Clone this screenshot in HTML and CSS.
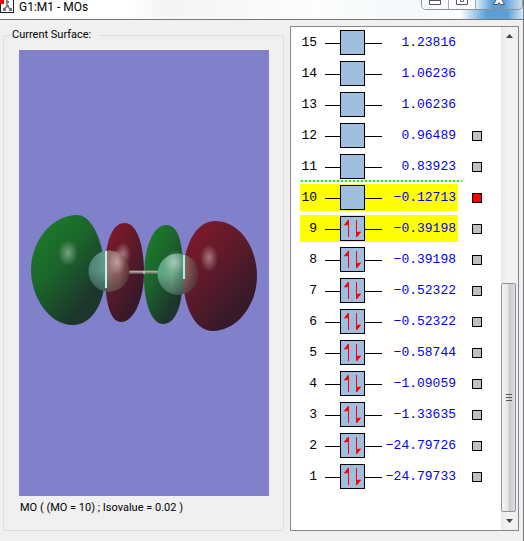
FILE: index.html
```html
<!DOCTYPE html>
<html lang="en">
<head>
  <meta charset="UTF-8" />
  <meta name="viewport" content="width=device-width, initial-scale=1.0"/>
  <title>G1:M1 - MOs</title>
  <link rel="stylesheet" href="styles.css">
</head>
<body>
  <header class="titlebar">
    <svg class="app-icon" width="14" height="13" viewBox="0 0 14 13">
      <path d="M0 0h14v13H0z" fill="#222"/>
      <path d="M1 0h12v12H1z" fill="#fff"/>
      <path d="M7 0v6M7 6L4 9M7 6l3 3" stroke="#777" stroke-width="1.5" fill="none"/>
      <path d="M6 1h3v2H6zM6 5h3v2H6zM3 8h3v3H3zM9 8h3v3H9z" fill="#777"/>
      <path d="M0 0h4v4H0z" fill="#f00"/>
    </svg>
    <h1>G1:M1 - MOs</h1>
    <div class="window-buttons">
      <button aria-label="Minimize"><svg width="12" height="5" viewBox="0 0 12 5"><path d="M.5 0v4.500h11V0M1 .5h10" fill="#fff" stroke="#535666"/></svg></button>
      <button aria-label="Maximize"><svg width="12" height="5" viewBox="0 0 12 5"><path d="M.5 0v4.500h11V0M4.500 0v1.500h3V0" fill="#fff" stroke="#535666"/></svg></button>
      <button class="close" aria-label="Close"><svg width="12" height="5" viewBox="0 0 12 5"><path d="M3 0L.5 4.500h4L6 2.500l1.500 2h4L9 0" fill="#fff" stroke="#535666"/></svg></button>
    </div>
  </header>

  <main class="content">
    <fieldset class="surface">
      <legend>Current Surface:</legend>
      <div class="view">
        <svg viewBox="0 0 250 446" role="img" aria-label="Molecular orbital surface">
          <defs>
            <linearGradient id="green" x1="0.25" y1="0.05" x2="0.8" y2="0.75">
              <stop offset="0" stop-color="#1c7a2a"/>
              <stop offset="0.45" stop-color="#1b632b"/>
              <stop offset="1" stop-color="#1c362b"/>
            </linearGradient>
            <linearGradient id="red" x1="0.2" y1="0.05" x2="0.75" y2="0.8">
              <stop offset="0" stop-color="#7c1a2a"/>
              <stop offset="0.45" stop-color="#5f1a2a"/>
              <stop offset="1" stop-color="#371929"/>
            </linearGradient>
            <linearGradient id="atom-left" x1="0" y1="0" x2="1" y2="0">
              <stop offset="0" stop-color="#4a7f70"/>
              <stop offset="0.42" stop-color="#659b8a"/>
              <stop offset="0.43" stop-color="#9c7673"/>
              <stop offset="0.75" stop-color="#8c5c5a"/>
              <stop offset="1" stop-color="#5b3035"/>
            </linearGradient>
            <linearGradient id="atom-right" x1="0" y1="0" x2="1" y2="0">
              <stop offset="0" stop-color="#57a57b"/>
              <stop offset="0.35" stop-color="#70ae8c"/>
              <stop offset="0.62" stop-color="#4f856c"/>
              <stop offset="0.63" stop-color="#906864"/>
              <stop offset="1" stop-color="#5c2a31"/>
            </linearGradient>
            <linearGradient id="shade" x1="0" y1="0" x2="0" y2="1">
              <stop offset="0.5" stop-color="#24272b" stop-opacity="0"/>
              <stop offset="1" stop-color="#24272b" stop-opacity="0.5"/>
            </linearGradient>
            <radialGradient id="shine">
              <stop offset="0" stop-color="#fff" stop-opacity="0.4"/>
              <stop offset="1" stop-color="#fff" stop-opacity="0"/>
            </radialGradient>
          </defs>
          <!-- lobes -->
          <path d="M58 165C75 165 86 198 86 226C86 254 72 275 54 275C30 275 12 247 12 220C12 190 34 165 58 165Z" fill="url(#green)"/>
          <path d="M106 173C118 173 125 196 125 222C125 249 115 272 102 272C91 272 86 252 86 222C86 194 92 173 106 173Z" fill="url(#red)"/>
          <path d="M147 175C160 175 164 193 164 225C164 252 158 274 144 274C132 274 125 251 125 228C125 197 134 175 147 175Z" fill="url(#green)"/>
          <path d="M196 171C221 171 238 198 238 226C238 256 217 281 194 281C174 281 164 253 164 226C164 196 177 171 196 171Z" fill="url(#red)"/>
          <ellipse cx="49" cy="203" rx="10" ry="13" fill="url(#shine)"/>
          <ellipse cx="104" cy="204" rx="8" ry="12" fill="url(#shine)"/>
          <ellipse cx="190" cy="208" rx="9" ry="14" fill="url(#shine)"/>
          <!-- bond -->
          <path d="M110 222H141" stroke="#8f8a7c" stroke-width="3"/>
          <path d="M110 221.500H141" stroke="#b3a79c"/>
          <path d="M125 221v3" stroke="#d8f5ef"/>
          <!-- atoms -->
          <circle cx="90" cy="221" r="20.500" fill="url(#atom-left)"/>
          <circle cx="90" cy="221" r="20.500" fill="url(#shade)"/>
          <ellipse cx="98" cy="212" rx="9" ry="13" fill="url(#shine)"/>
          <path d="M87 201v37" stroke="#b6f5ee" stroke-width="2"/>
          <circle cx="159" cy="224" r="20.500" fill="url(#atom-right)"/>
          <circle cx="159" cy="224" r="20.500" fill="url(#shade)"/>
          <ellipse cx="156" cy="212" rx="11" ry="12" fill="url(#shine)"/>
          <path d="M165 205v24" stroke="#a9f5ec" stroke-width="2"/>
        </svg>
      </div>
      <p class="caption">MO ( (MO = 10) ; Isovalue = 0.02 )</p>
    </fieldset>

    <section class="orbitals">
      <table>
        <tbody id="orbital-rows"></tbody>
      </table>
      <div class="scrollbar">
        <button aria-label="Scroll up"><svg width="7" height="4" viewBox="0 0 7 4"><path d="M0 4L3.500 0L7 4z" fill="#444"/></svg></button>
        <div class="track"><div class="thumb"><i></i><i></i><i></i></div></div>
        <button aria-label="Scroll down"><svg width="7" height="4" viewBox="0 0 7 4"><path d="M0 0h7L3.500 4z" fill="#444"/></svg></button>
      </div>
    </section>
  </main>

  <script>
    const energies = [
      "-24.79733", "-24.79726", "-1.33635", "-1.09059", "-0.58744",
      "-0.52322", "-0.52322", "-0.39198", "-0.39198", "-0.12713",
      "0.83923", "0.96489", "1.06236", "1.06236", "1.23816"
    ];
    const occupied = 9;
    const electrons = `
      <path d="M8.500 21V4M8 4.500v4L4.500 9z" class="spin"/>
      <path d="M16.500 4v17M17 20.500v-4l3.500-.5z" class="spin"/>`;

    let rows = "";
    for (let n = energies.length; n >= 1; n--) {
      const names = [];
      if (n === 9 || n === 10) names.push("frontier");
      if (n === occupied + 1) names.push("lumo");
      const energy = energies[n - 1].replace("-", "\u2212");
      const check = n <= 12
        ? `<input type="checkbox" aria-label="Surface for MO ${n}" ${n === 10 ? "checked" : ""}>`
        : "";
      rows += `
        <tr class="${names.join(" ")}">
          <th scope="row">${n}</th>
          <td class="level"><svg width="57" height="25" viewBox="0 0 57 25">
            <path d="M0 13.500H57" stroke="#000"/>
            <g transform="translate(15)">
              <rect x=".5" y=".5" width="24" height="24" fill="#a0bedf" stroke="#000"/>
              ${n <= occupied ? electrons : ""}
            </g>
          </svg></td>
          <td class="energy">${energy}</td>
          <td class="pick">${check}</td>
        </tr>`;
    }
    document.getElementById("orbital-rows").innerHTML = rows;
  </script>
</body>
</html>
```
FILE: styles.css
```css
* {
  box-sizing: border-box;
}
body {
  margin: 0;
  min-height: 100vh;
  display: flex;
  flex-direction: column;
  background: #f0f0f0;
  border-right: 1px solid #77777b;
  font-family: Roboto, "Liberation Sans", sans-serif;
  font-size: 11px;
  color: #000;
}
button {
  padding: 0;
  border: none;
  background: none;
}
svg {
  display: block;
}

.titlebar {
  height: 20px;
  display: flex;
  align-items: flex-start;
  background: linear-gradient(to right, #fff 0 24%, #f4f4f4 32%, #fdfdfd 60%, #f3f8f9 80%, #fff 88%, #5a9fd6 93% 97%, #d8e8f5);
  border-bottom: 1px solid #77777b;
}
.titlebar h1 {
  margin: 0 auto 0 5px;
  font-size: 12px;
  font-weight: normal;
  line-height: 14px;
}
.window-buttons {
  display: flex;
  height: 10px;
  border: 1px solid #8e9298;
  border-top: none;
  border-radius: 0 0 5px 5px;
  overflow: hidden;
}
.window-buttons button {
  width: 27px;
  display: flex;
  justify-content: center;
  background: #fafafa;
  border-right: 1px solid #a5a9ae;
}
.window-buttons .close {
  width: 46px;
  background: linear-gradient(to right, #e2f2f8, #5a9fd6 35% 60%, #cfe0ee);
  border-right: none;
}

.content {
  flex: 1;
  display: grid;
  grid-template-columns: 1fr 229px;
  gap: 6px;
  padding: 6px 4px 10px 3px;
}

.surface {
  min-width: 0;
  margin: 2px 0 0;
  padding: 8px 14px 15px 15px;
  display: flex;
  flex-direction: column;
  border: 1px solid #d5dfe5;
  border-radius: 3px;
}
.surface legend {
  margin-left: -9px;
  padding: 0 8px 0 2px;
  line-height: 14px;
}
.view {
  flex: 1;
  display: flex;
  align-items: center;
  justify-content: center;
  background: #8080cb;
}
.view svg {
  width: 100%;
}
.caption {
  margin: 5px 0 0 1px;
  line-height: 14px;
}

.orbitals {
  display: flex;
  justify-content: space-between;
  background: #fff;
  border: 1px solid #828790;
}
.orbitals table {
  margin-left: 9px;
  align-self: flex-start;
  border-spacing: 0 4px;
  margin-top: -2px;
  font-family: "Liberation Mono", monospace;
  font-size: 13px;
}
.orbitals tr {
  height: 27px;
}
.orbitals th, .orbitals td {
  padding: 0;
}
.orbitals th {
  position: relative;
  width: 25px;
  padding-right: 8px;
  font-weight: normal;
  text-align: right;
}
.orbitals .energy {
  width: 76px;
  padding-right: 2px;
  color: #0000f0;
  text-align: right;
}
.frontier th, .frontier .level, .frontier .energy {
  background: #ff0;
}
/* gap between empty and occupied side of the list */
.lumo th::before {
  content: "";
  position: absolute;
  top: -4px;
  left: 1px;
  width: 161px;
  height: 2px;
  background: repeating-linear-gradient(to right, #0f0 0 2px, transparent 2px 4px);
}
.spin {
  fill: #f00;
  stroke: #f00;
}
.orbitals .pick {
  padding-left: 14px;
}
.pick input {
  display: block;
  appearance: none;
  width: 10px;
  height: 10px;
  margin: 0;
  background: #c0c0c0;
  border: 1px solid #000;
}
.pick input:checked {
  background: #f00;
}

.scrollbar {
  width: 17px;
  display: flex;
  flex-direction: column;
  background: linear-gradient(to right, #e9e9e9, #f3f3f3 40%, #f0f0f0);
}
.scrollbar button {
  height: 18px;
  display: flex;
  align-items: center;
  justify-content: center;
}
.track {
  flex: 1;
  display: flex;
  align-items: flex-end;
}
.thumb {
  width: 15px;
  height: 49%;
  display: flex;
  flex-direction: column;
  align-items: center;
  justify-content: center;
  gap: 2px;
  background: linear-gradient(to right, #f5f5f5, #e6e6e8 45%, #c9cacd 55%, #dcdcde);
  border: 1px solid #8f9296;
  border-radius: 2px;
}
.thumb i {
  width: 6px;
  height: 1px;
  background: #555;
}
```
